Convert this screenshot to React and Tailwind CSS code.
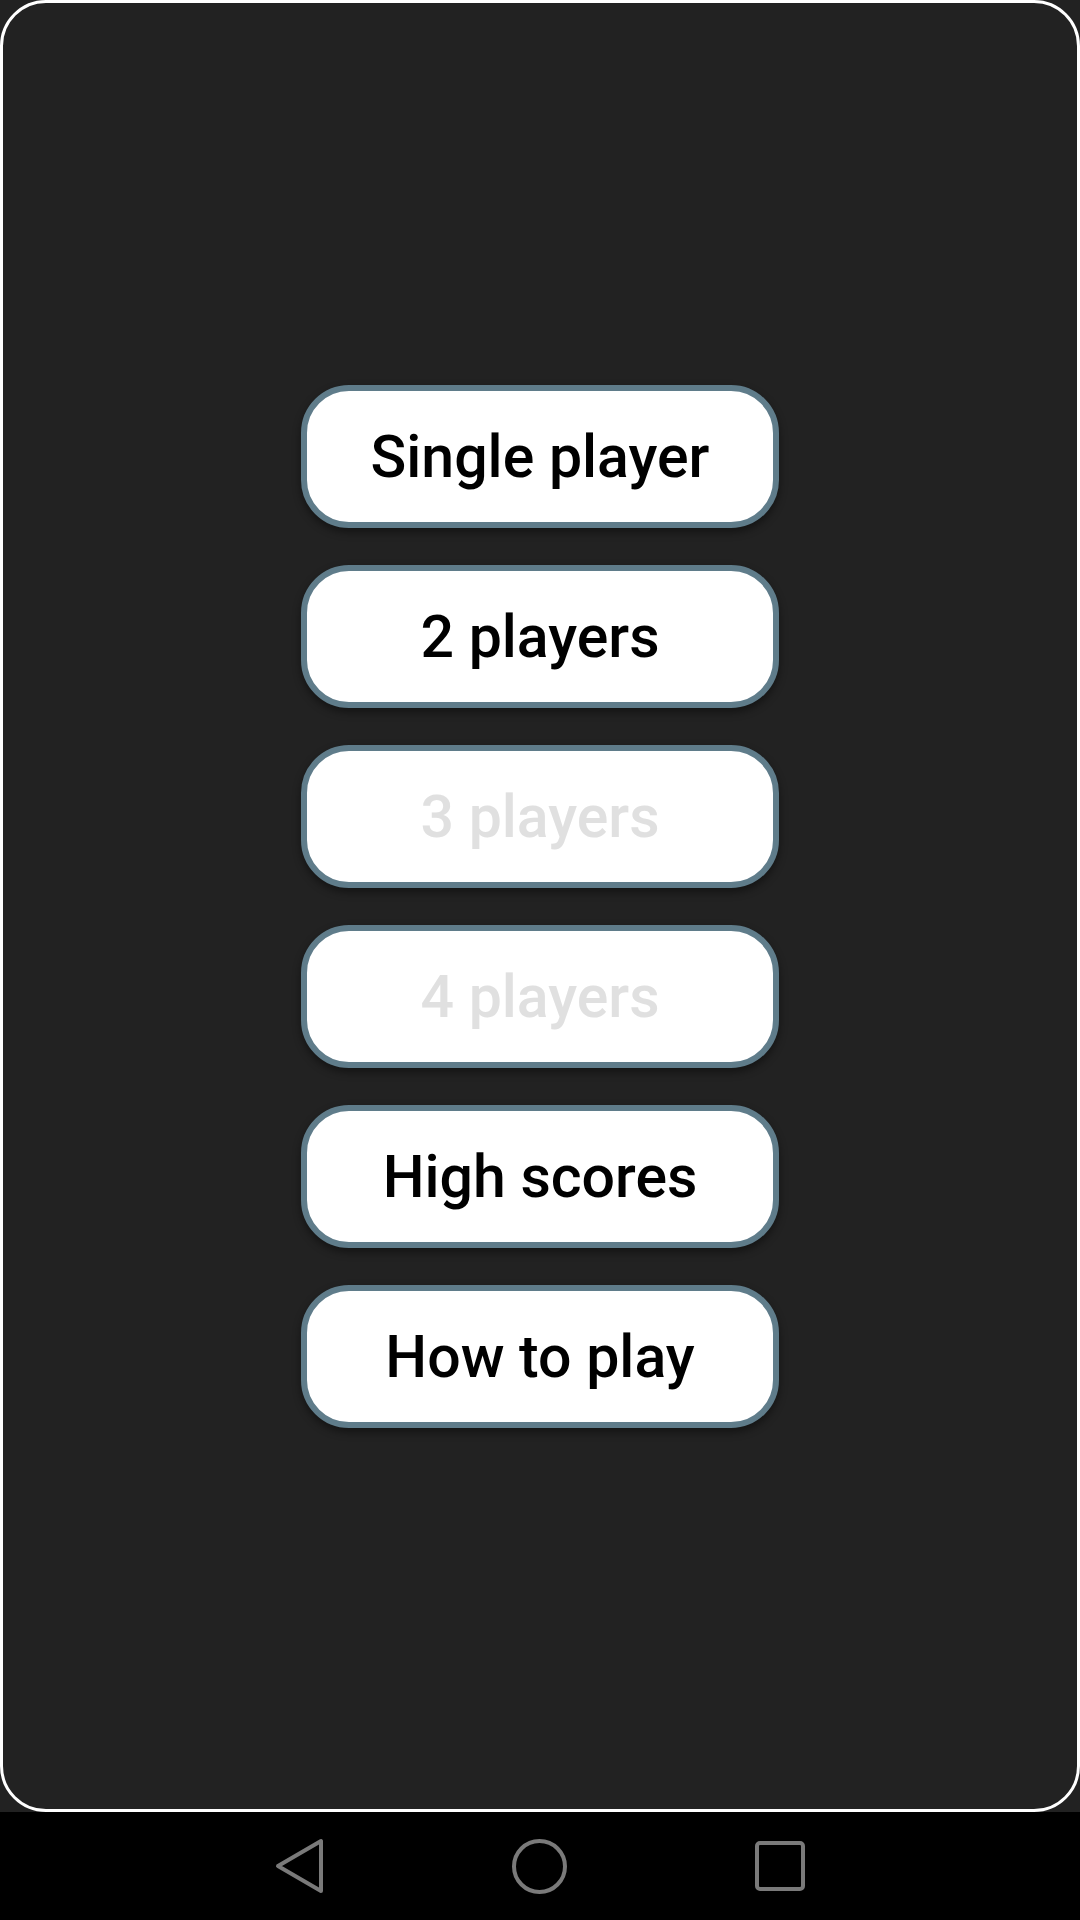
const items = [
    { label: 'Single player', enabled: true },
    { label: '2 players', enabled: true },
    { label: '3 players', enabled: false },
    { label: '4 players', enabled: false },
    { label: 'High scores', enabled: true },
    { label: 'How to play', enabled: true },
];

function MenuButton({ label, enabled }) {
    return (
        <button
            className={
                enabled
                    ? 'w-[478px] h-[143px] bg-white border-[6px] border-[#5f7c8a] rounded-[48px] shadow-[0_4px_8px_rgba(0,0,0,0.45)] text-[59px] font-medium text-black leading-none'
                    : 'w-[478px] h-[143px] bg-white border-[6px] border-[#5f7c8a] rounded-[48px] shadow-[0_4px_8px_rgba(0,0,0,0.45)] text-[59px] font-medium text-[#e0e0e0] leading-none'
            }
        >
            {label}
        </button>
    );
}

export default function App() {
    return (
        <div className="w-[1080px] h-[1920px] bg-[#222222] flex flex-col" style={{ fontFamily: 'Roboto, "Noto Sans", sans-serif' }}>
            <div className="h-[1812px] border-[3px] border-white rounded-[46px] flex flex-col items-center justify-center gap-[37px]">
                {items.map((item) => (
                    <MenuButton key={item.label} {...item} />
                ))}
            </div>
            <div className="flex-1 bg-black flex items-center justify-center">
                <div className="w-[530px] flex items-center justify-between">
                    <svg width="49" height="56" viewBox="0 0 49 56" fill="none" stroke="#7a7a7a" strokeWidth="4" strokeLinejoin="round">
                        <path d="M46 3 L46 53 L3 28 Z" />
                    </svg>
                    <svg width="57" height="57" viewBox="0 0 57 57" fill="none" stroke="#7a7a7a" strokeWidth="4">
                        <circle cx="28.5" cy="28.5" r="25.5" />
                    </svg>
                    <svg width="50" height="50" viewBox="0 0 50 50" fill="none" stroke="#7a7a7a" strokeWidth="4">
                        <rect x="2" y="2" width="46" height="46" rx="3" />
                    </svg>
                </div>
            </div>
        </div>
    );
}
